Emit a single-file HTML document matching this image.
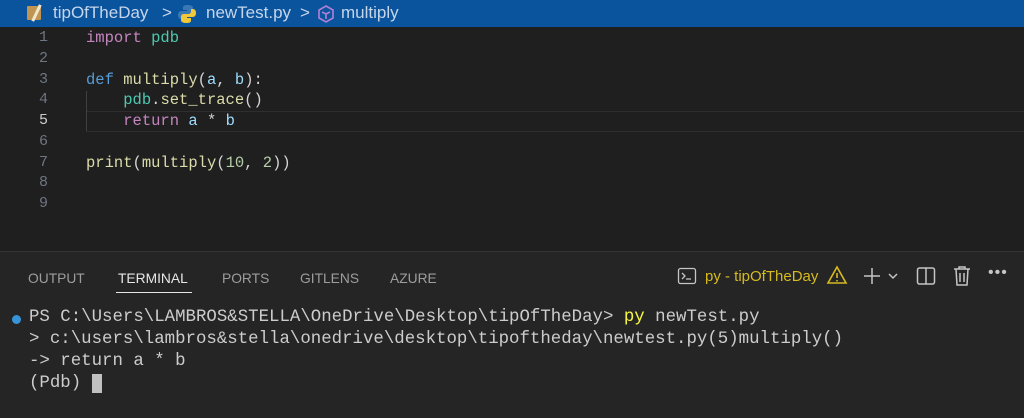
<!DOCTYPE html>
<html><head><meta charset="utf-8"><style>
body{margin:0;width:1024px;height:417px;background:#1f1f1f;overflow:hidden;position:relative;font-family:"Liberation Sans",sans-serif}
.hdr{position:absolute;left:0;top:0;width:1024px;height:27px;background:#0a539d;color:#c6d6ea;font-size:17px}
.hdr span{position:absolute;top:3px}
.code{position:absolute;font-family:"Liberation Mono",monospace;font-size:15.5px;white-space:pre}
.ln{position:absolute;left:20px;width:28px;text-align:right;font-family:"Liberation Mono",monospace;font-size:15px;color:#6e7681}
.kw{color:#c586c0}.fn{color:#dcdcaa}.mod{color:#4ec9b0}.v{color:#9cdcfe}.n{color:#b5cea8}.d{color:#569cd6}.p{color:#d4d4d4}
.panel{position:absolute;left:0;top:251px;width:1024px;height:166px;background:#252526;border-top:1px solid #333}
.tab{position:absolute;top:19px;font-size:13.8px;color:#9d9d9d}
.term{position:absolute;left:29px;font-family:"Liberation Mono",monospace;font-size:17.4px;color:#cccccc;white-space:pre}
</style></head><body>
<div class="hdr">
<div style="position:absolute;left:27px;top:6px;width:14px;height:14px;background:#c09553;border-radius:1px"></div>
<div style="position:absolute;left:35px;top:4px;width:3px;height:18px;background:#f0e6c8;transform:rotate(25deg)"></div>
<span style="left:53px">tipOfTheDay</span>
<span style="left:162px">&gt;</span>
<svg style="position:absolute;left:177px;top:4px" width="20" height="20" viewBox="0 0 20 20"><path d="M10 1c-4 0-4 2-4 3v2h4v1H4c-2 0-3 2-3 4s1 4 3 4h2v-2c0-2 1-3 3-3h4c2 0 3-1 3-3V4c0-2-2-3-6-3z" fill="#3a78b5"/><path d="M10 19c4 0 4-2 4-3v-2h-4v-1h6c2 0 3-2 3-4s-1-4-3-4h-2v2c0 2-1 3-3 3H7c-2 0-3 1-3 3v3c0 2 2 3 6 3z" fill="#f0c83a"/></svg>
<span style="left:206px">newTest.py</span>
<span style="left:300px">&gt;</span>
<svg style="position:absolute;left:316px;top:4px" width="20" height="20" viewBox="0 0 20 20" fill="none" stroke="#b180d7" stroke-width="1.6"><path d="M10 2l7 4v8l-7 4-7-4V6z"/><path d="M6 8l4 2 4-2M10 10v5"/></svg>
<span style="left:341px">multiply</span>
</div>
<div class="ln" style="top:29px">1</div><div class="ln" style="top:50px">2</div><div class="ln" style="top:71px">3</div><div class="ln" style="top:91px">4</div><div class="ln" style="top:112px;color:#cccccc">5</div><div class="ln" style="top:133px">6</div><div class="ln" style="top:154px">7</div><div class="ln" style="top:174px">8</div><div class="ln" style="top:195px">9</div>
<div style="position:absolute;left:86px;top:111px;width:938px;height:19px;border-top:1px solid #2e2e2e;border-bottom:1px solid #2e2e2e"></div>
<div style="position:absolute;left:86px;top:91px;width:1px;height:40px;background:#404040"></div>
<div class="code" style="left:86px;top:29px"><span class="kw">import</span> <span class="mod">pdb</span></div>
<div class="code" style="left:86px;top:71px"><span class="d">def</span> <span class="fn">multiply</span><span class="p">(</span><span class="v">a</span><span class="p">, </span><span class="v">b</span><span class="p">):</span></div>
<div class="code" style="left:86px;top:91px">    <span class="mod">pdb</span><span class="p">.</span><span class="fn">set_trace</span><span class="p">()</span></div>
<div class="code" style="left:86px;top:112px">    <span class="kw">return</span> <span class="v">a</span> <span class="p">*</span> <span class="v">b</span></div>
<div class="code" style="left:86px;top:154px"><span class="fn">print</span><span class="p">(</span><span class="fn">multiply</span><span class="p">(</span><span class="n">10</span><span class="p">, </span><span class="n">2</span><span class="p">))</span></div>
<div class="panel">
<span class="tab" style="left:28px">OUTPUT</span>
<span class="tab" style="left:118px;color:#e7e7e7">TERMINAL</span>
<div style="position:absolute;left:116px;top:40px;width:76px;height:1px;background:#e7e7e7"></div>
<span class="tab" style="left:222px">PORTS</span>
<span class="tab" style="left:300px">GITLENS</span>
<span class="tab" style="left:390px">AZURE</span>
<svg style="position:absolute;left:677px;top:14px" width="20" height="20" viewBox="0 0 20 20" fill="none" stroke="#c5c5c5" stroke-width="1.3"><rect x="1.5" y="2.5" width="17" height="15" rx="2"/><path d="M5 7l3 3-3 3M9 13h5"/></svg>
<span style="position:absolute;left:705px;top:16px;font-size:15px;color:#d7ba1f">py - tipOfTheDay</span>
<svg style="position:absolute;left:826px;top:13px" width="22" height="20" viewBox="0 0 22 20" fill="none" stroke="#d7ba1f" stroke-width="1.6"><path d="M11 2L20 18H2z"/><path d="M11 8v5M11 15v1.5"/></svg>
<svg style="position:absolute;left:862px;top:14px" width="40" height="20" viewBox="0 0 40 20" fill="none" stroke="#c5c5c5" stroke-width="1.5"><path d="M10 2v16M2 10h16M27 8l4 4 4-4"/></svg>
<svg style="position:absolute;left:916px;top:14px" width="20" height="20" viewBox="0 0 20 20" fill="none" stroke="#c5c5c5" stroke-width="1.5"><rect x="1.5" y="2" width="17" height="16" rx="2"/><path d="M10 2v16"/></svg>
<svg style="position:absolute;left:952px;top:13px" width="20" height="22" viewBox="0 0 20 22" fill="none" stroke="#c5c5c5" stroke-width="1.5"><path d="M2 4h16M7 4V2h6v2M4 4l1 16h10l1-16M8 8v9M12 8v9"/></svg>
<span style="position:absolute;left:988px;top:12px;font-size:16px;color:#c5c5c5;letter-spacing:1px">•••</span>
<div style="position:absolute;left:12px;top:63px;width:9px;height:9px;border-radius:50%;background:#3794d9"></div>
<div class="term" style="top:56px">PS C:\Users\LAMBROS&amp;STELLA\OneDrive\Desktop\tipOfTheDay&gt; <span style="color:#f5f543">py</span> newTest.py</div>
<div class="term" style="top:78px">&gt; c:\users\lambros&amp;stella\onedrive\desktop\tipoftheday\newtest.py(5)multiply()</div>
<div class="term" style="top:100px">-&gt; return a * b</div>
<div class="term" style="top:122px">(Pdb) <span style="background:#c0c0c0">&nbsp;</span></div>
</div>
</body></html>
